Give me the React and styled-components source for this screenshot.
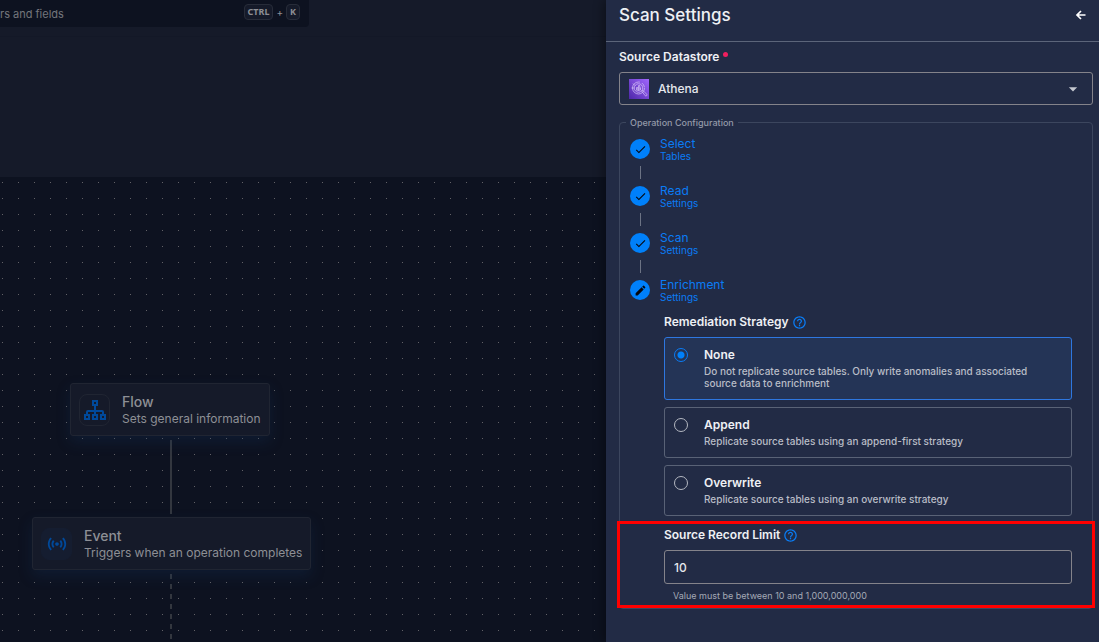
import { useState } from "react";
import styled, { createGlobalStyle } from "styled-components";
import { MdCheck, MdEdit, MdHelpOutline, MdSensors, MdArrowDropDown } from "react-icons/md";

const STEPS = [
    { title: "Select", sub: "Tables", done: true },
    { title: "Read", sub: "Settings", done: true },
    { title: "Scan", sub: "Settings", done: true },
    { title: "Enrichment", sub: "Settings", done: false },
];

const STRATEGIES = [
    {
        id: "none",
        title: "None",
        text: "Do not replicate source tables. Only write anomalies and associated source data to enrichment",
    },
    { id: "append", title: "Append", text: "Replicate source tables using an append-first strategy" },
    { id: "overwrite", title: "Overwrite", text: "Replicate source tables using an overwrite strategy" },
];

const SitemapIcon = () => (
    <svg width="24" height="24" viewBox="0 0 24 24" fill="none" stroke="currentColor" strokeWidth="2" aria-hidden="true">
        <rect x="10" y="3" width="4" height="4" />
        <rect x="2" y="17" width="4" height="4" />
        <rect x="10" y="17" width="4" height="4" />
        <rect x="18" y="17" width="4" height="4" />
        <path d="M12 7v10M4 17v-3q0-1 1-1h14q1 0 1 1v3" />
    </svg>
);

const ArrowLeftIcon = () => (
    <svg width="11" height="12" viewBox="0 0 11 12" fill="none" stroke="currentColor" strokeWidth="1.7" aria-hidden="true">
        <path d="M10.500 6H2M6 2L2 6 6 10" />
    </svg>
);

const AthenaIcon = () => (
    <svg width="20" height="20" viewBox="0 0 40 40" aria-hidden="true">
        <defs>
            <linearGradient id="athena" x1="0" y1="1" x2="1" y2="0">
                <stop offset="0" stopColor="#4d27a8" />
                <stop offset="1" stopColor="#a166ff" />
            </linearGradient>
        </defs>
        <rect width="40" height="40" fill="url(#athena)" />
        <g fill="none" stroke="#d8c6f8" strokeWidth="1.4">
            <circle cx="19" cy="18" r="12" strokeDasharray="58 4 10 4" />
            <circle cx="19" cy="18" r="8.5" />
            <path d="M15 23v-6h2.500v7M19 24V13h2.500v11M23 22v-5" />
            <path d="M25.500 24.500l2-2 8 8q1 2-0.500 3t-2.500 0z" />
            <path d="M5 18h5M8 9l4 4" />
        </g>
    </svg>
);

const App = () => {
    const [strategy, setStrategy] = useState("none");
    const [limit, setLimit] = useState("10");

    return (
        <Page>
            <GlobalStyle />
            <Workspace>
                <TopBar>
                    <SearchBox>
                        <SearchInput type="search" aria-label="Search" placeholder="rs and fields" />
                        <Shortcut>
                            <Key>CTRL</Key>+<Key>K</Key>
                        </Shortcut>
                    </SearchBox>
                </TopBar>
                <SubHeader />
                <Canvas>
                    <Edges aria-hidden="true">
                        <defs>
                            <pattern id="dots" width="16" height="16" patternUnits="userSpaceOnUse">
                                <rect x="2" y="5" width="1" height="1" fill="#626267" stroke="none" />
                            </pattern>
                        </defs>
                        <rect width="100%" height="100%" fill="url(#dots)" stroke="none" />
                        <line x1="171" y1="263" x2="171" y2="337" />
                        <line x1="171" y1="397" x2="171" y2="100%" strokeDasharray="5 5" />
                    </Edges>
                    <Node $x={70} $y={206}>
                        <NodeIcon $outlined>
                            <SitemapIcon />
                        </NodeIcon>
                        <NodeText>
                            <NodeTitle>Flow</NodeTitle>
                            <NodeInfo>Sets general information</NodeInfo>
                        </NodeText>
                    </Node>
                    <Node $x={32} $y={340}>
                        <NodeIcon>
                            <MdSensors size={22} />
                        </NodeIcon>
                        <NodeText>
                            <NodeTitle>Event</NodeTitle>
                            <NodeInfo>Triggers when an operation completes</NodeInfo>
                        </NodeText>
                    </Node>
                </Canvas>
            </Workspace>

            <Drawer>
                <DrawerHeader>
                    <DrawerTitle>Scan Settings</DrawerTitle>
                    <BackButton type="button" aria-label="Back">
                        <ArrowLeftIcon />
                    </BackButton>
                </DrawerHeader>
                <DrawerBody>
                    <FieldLabel htmlFor="datastore">
                        Source Datastore <Required />
                    </FieldLabel>
                    <SelectBox>
                        <AthenaIcon />
                        <Select id="datastore" defaultValue="athena">
                            <option value="athena">Athena</option>
                        </Select>
                        <MdArrowDropDown size={20} />
                    </SelectBox>

                    <Config>
                        <Legend>Operation Configuration</Legend>
                        <StepList>
                            {STEPS.map((step) => (
                                <Step key={step.title}>
                                    <StepHead>
                                        <StepDot>{step.done ? <MdCheck size={13} /> : <MdEdit size={13} />}</StepDot>
                                        <div>
                                            <StepTitle>{step.title}</StepTitle>
                                            <StepSub>{step.sub}</StepSub>
                                        </div>
                                    </StepHead>
                                </Step>
                            ))}
                        </StepList>

                        <Section>
                            <LabelRow id="strategy-label">
                                <span>Remediation Strategy</span>
                                <MdHelpOutline size={15} />
                            </LabelRow>
                            <Options role="radiogroup" aria-labelledby="strategy-label">
                                {STRATEGIES.map((item) => (
                                    <Option key={item.id} $active={strategy === item.id}>
                                        <Radio
                                            type="radio"
                                            name="strategy"
                                            value={item.id}
                                            checked={strategy === item.id}
                                            onChange={() => setStrategy(item.id)}
                                        />
                                        <div>
                                            <OptionTitle>{item.title}</OptionTitle>
                                            <OptionText>{item.text}</OptionText>
                                        </div>
                                    </Option>
                                ))}
                            </Options>
                        </Section>

                        <Section $highlight>
                            <LabelRow as="label" htmlFor="limit">
                                <span>Source Record Limit</span>
                                <MdHelpOutline size={15} />
                            </LabelRow>
                            <LimitInput
                                id="limit"
                                type="text"
                                inputMode="numeric"
                                aria-describedby="limit-hint"
                                value={limit}
                                onChange={(e) => setLimit(e.target.value)}
                            />
                            <Hint id="limit-hint">Value must be between 10 and 1,000,000,000</Hint>
                        </Section>
                    </Config>
                </DrawerBody>
            </Drawer>
        </Page>
    );
};

const GlobalStyle = createGlobalStyle`
    *, *::before, *::after {
        box-sizing: border-box;
    }
    body {
        margin: 0;
        background: #0d1220;
        font-family: Inter, "Liberation Sans", sans-serif;
        font-size: 12px;
    }
    input, select, button {
        font-family: inherit;
    }
`;

const Page = styled.div`
    display: flex;
    min-height: 100vh;
`;

const Workspace = styled.main`
    flex: 1;
    min-width: 0;
    display: flex;
    flex-direction: column;
    background: #151a29;
    color: #8d8f95;
`;

const TopBar = styled.header`
    height: 37px;
    border-bottom: 1px solid #131827;
`;

const SearchBox = styled.div`
    display: flex;
    align-items: center;
    width: 51%;
    height: 27px;
    padding-right: 9px;
    background: #0d1220;
    border-radius: 0 0 4px 0;
`;

const SearchInput = styled.input`
    flex: 1;
    min-width: 0;
    padding: 0;
    border: none;
    outline: none;
    background: transparent;
    color: #74767c;
    font-size: 11px;

    &::placeholder {
        color: #74767c;
    }
`;

const Shortcut = styled.div`
    display: flex;
    align-items: center;
    gap: 3px;
    padding-bottom: 3px;
    font-size: 10px;
`;

const Key = styled.kbd`
    padding: 0 3px;
    border: 1px solid #272c39;
    border-radius: 4px;
    background: #151a29;
    font-family: "Noto Sans", sans-serif;
    font-size: 9px;
    font-weight: 700;
    line-height: 14px;
`;

const SubHeader = styled.div`
    height: 140px;
`;

const Canvas = styled.section`
    position: relative;
    flex: 1;
    overflow: hidden;
    background: #0d1220;
`;

const Edges = styled.svg`
    position: absolute;
    inset: 0;
    width: 100%;
    height: 100%;
    stroke: #33373f;
    stroke-width: 2px;
`;

const Node = styled.article`
    position: absolute;
    left: ${({ $x }) => $x}px;
    top: ${({ $y }) => $y}px;
    display: flex;
    align-items: center;
    gap: 12px;
    padding: 8px;
    border: 1px solid #202532;
    border-radius: 3px;
    background: #151a29;
    box-shadow: 0 6px 14px rgba(20, 50, 90, 0.3);
    white-space: nowrap;
`;

const NodeIcon = styled.div`
    display: flex;
    align-items: center;
    justify-content: center;
    width: 31px;
    height: 32px;
    border: 1px solid ${({ $outlined }) => ($outlined ? "#202532" : "#151d30")};
    border-radius: 8px;
    background: ${({ $outlined }) => ($outlined ? "transparent" : "#151d30")};
    color: #00499a;
`;

const NodeText = styled.div`
    display: flex;
    flex-direction: column;
`;

const NodeTitle = styled.h3`
    margin: 0;
    font-size: 14px;
    font-weight: 500;
    line-height: 19px;
`;

const NodeInfo = styled.p`
    margin: 0;
    font-size: 12px;
    line-height: 16px;
`;

const Drawer = styled.aside`
    position: relative;
    width: 493px;
    max-width: 100%;
    background: #222b45;
    color: #eef0f4;
    box-shadow: -2px 0 10px rgba(0, 0, 0, 0.4);
`;

const DrawerHeader = styled.header`
    display: flex;
    align-items: center;
    justify-content: space-between;
    padding: 4px 13px 15px 13px;
    border-bottom: 1px solid #5c657a;
`;

const DrawerTitle = styled.h2`
    margin: 0;
    font-size: 17px;
    font-weight: 500;
    line-height: 22px;
`;

const BackButton = styled.button`
    display: flex;
    padding: 0;
    border: none;
    background: transparent;
    color: #ffffff;
    cursor: pointer;
`;

const DrawerBody = styled.div`
    padding: 7px 6px 0 13px;
`;

const FieldLabel = styled.label`
    display: flex;
    align-items: center;
    gap: 4px;
    font-size: 12px;
    font-weight: 600;
    line-height: 16px;
`;

const Required = styled.span`
    width: 5px;
    height: 5px;
    margin-bottom: 6px;
    border-radius: 50%;
    background: #f01f5f;
`;

const SelectBox = styled.div`
    display: flex;
    align-items: center;
    gap: 9px;
    height: 33px;
    margin-top: 7px;
    padding: 0 9px;
    border: 1px solid #84838a;
    border-radius: 3px;
    color: #c4c8d0;
`;

const Select = styled.select`
    flex: 1;
    padding: 0;
    border: none;
    outline: none;
    appearance: none;
    background: transparent;
    color: #e6e8ed;
    font-size: 12px;
    font-weight: 500;
`;

const Config = styled.fieldset`
    min-width: 0;
    margin: 11px 0 0;
    padding: 8px 20px 6px 10px;
    border: 1px solid #3c465e;
    border-radius: 4px;
`;

const Legend = styled.legend`
    margin-left: -4px;
    padding: 0 4px;
    color: #9399a8;
    font-size: 9px;
    font-weight: 500;
    line-height: 13px;
`;

const StepList = styled.ol`
    margin: 0;
    padding: 0;
    list-style: none;
    color: #0a7cf5;
`;

const Step = styled.li`
    &:not(:last-child)::after {
        content: "";
        display: block;
        width: 1px;
        height: 13px;
        margin: 4px 0 5px 10px;
        background: #6c7384;
    }
`;

const StepHead = styled.div`
    display: flex;
    align-items: flex-start;
    gap: 10px;
`;

const StepDot = styled.span`
    display: flex;
    align-items: center;
    justify-content: center;
    width: 20px;
    height: 20px;
    margin-top: 2px;
    border-radius: 50%;
    background: #0080fa;
    color: #05080f;
`;

const StepTitle = styled.div`
    font-size: 12px;
    line-height: 14px;
`;

const StepSub = styled.div`
    font-size: 10px;
    line-height: 11px;
`;

const Section = styled.div`
    position: relative;
    margin: 10px 0 0 34px;

    ${({ $highlight }) =>
        $highlight &&
        `
        &::after {
            content: "";
            position: absolute;
            inset: -5px -23px -6px -47px;
            border: 3px solid #ff0000;
            pointer-events: none;
        }
    `}
`;

const LabelRow = styled.div`
    display: flex;
    align-items: center;
    gap: 3px;
    font-size: 12px;
    font-weight: 600;
    line-height: 18px;

    svg {
        color: #0a7cf5;
    }
`;

const Options = styled.div`
    display: flex;
    flex-direction: column;
    gap: 7px;
    margin-top: 6px;
`;

const Option = styled.label`
    display: flex;
    align-items: flex-start;
    gap: 16px;
    padding: 9px 9px 10px;
    border: 1px solid ${({ $active }) => ($active ? "#2e77e0" : "#596276")};
    border-radius: 3px;
    background: ${({ $active }) => ($active ? "#243456" : "transparent")};
    cursor: pointer;
`;

const Radio = styled.input`
    flex: none;
    appearance: none;
    width: 14px;
    height: 14px;
    margin: 1px 0 0;
    border: 1px solid #b4b8c1;
    border-radius: 50%;

    &:checked {
        border-color: #0a7cf5;
        background: radial-gradient(circle, #0080fa 3px, transparent 4px);
    }
`;

const OptionTitle = styled.div`
    font-size: 12px;
    font-weight: 600;
    line-height: 16px;
`;

const OptionText = styled.div`
    margin-top: 2px;
    color: #b9bdc7;
    font-size: 10px;
    font-weight: 500;
    line-height: 12px;
`;

const LimitInput = styled.input`
    display: block;
    width: 100%;
    height: 34px;
    margin-top: 6px;
    padding: 0 9px;
    border: 1px solid #84838a;
    border-radius: 3px;
    outline: none;
    background: transparent;
    color: #e6e8ed;
    font-size: 12px;
    font-weight: 500;
`;

const Hint = styled.p`
    margin: 6px 0 0 9px;
    color: #a4a9b5;
    font-size: 9px;
    line-height: 12px;
`;

export default App;
